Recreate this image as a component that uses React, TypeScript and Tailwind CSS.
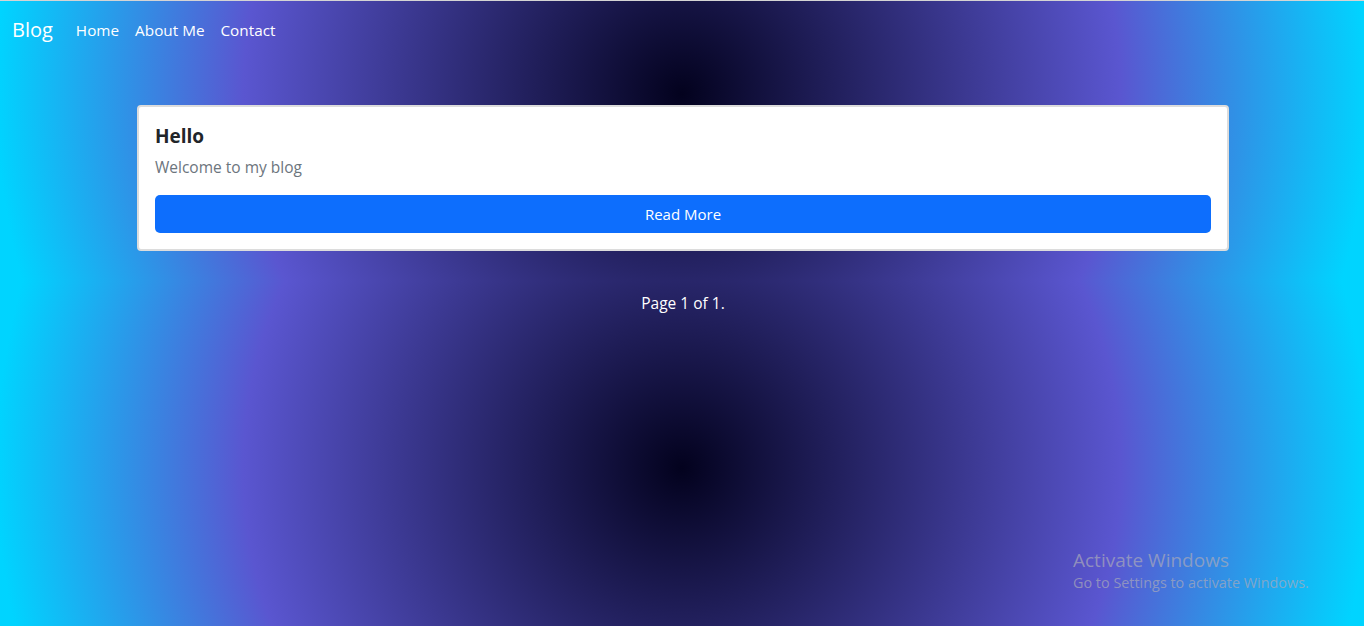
export default function App() {
  return (
    <div
      className="relative min-h-[626px] overflow-hidden bg-[radial-gradient(circle,#03021e_0%,#5a56d0_62%,#00d4ff_97%)] [background-size:100%_374px] [background-position:0_-93px] font-['Open_Sans',sans-serif] text-white"
    >
      <div className="h-px bg-[#d4d4d4]" />
      <nav className="flex items-center px-3 pt-[9px] pb-2">
        <a href="#" className="mr-[15px] text-[20px] leading-[30px] text-white">
          Blog
        </a>
        <ul className="flex">
          {["Home", "About Me", "Contact"].map((l) => (
            <li key={l}>
              <a href="#" className="block px-2 py-2 text-[15.3px] leading-6 text-white">
                {l}
              </a>
            </li>
          ))}
        </ul>
      </nav>

      <main className="mt-[47px] flex flex-col items-center pl-[2px]">
        <div className="w-[1092px] rounded-[4px] border-2 border-[#dcdcdc] bg-white px-[16px] pt-[17px] pb-[16px]">
          <h5 className="text-[19px] leading-6 font-bold text-[#212529]">Hello</h5>
          <p className="mt-[7px] text-[15.5px] leading-6 text-[#6c757d]">Welcome to my blog</p>
          <button className="mt-[16px] h-[38px] w-full rounded-[5px] bg-[#0d6efd] text-[15px] text-white">
            Read More
          </button>
        </div>
        <p className="mt-[40px] text-center text-[15.5px] leading-6 text-white">Page 1 of 1.</p>
      </main>

      <div className="absolute left-[1073px] top-[547px] text-[rgba(170,170,185,0.7)]">
        <div className="text-[19px] leading-[26px]">Activate Windows</div>
        <div className="text-[14.4px] leading-5">Go to Settings to activate Windows.</div>
      </div>
    </div>
  )
}
